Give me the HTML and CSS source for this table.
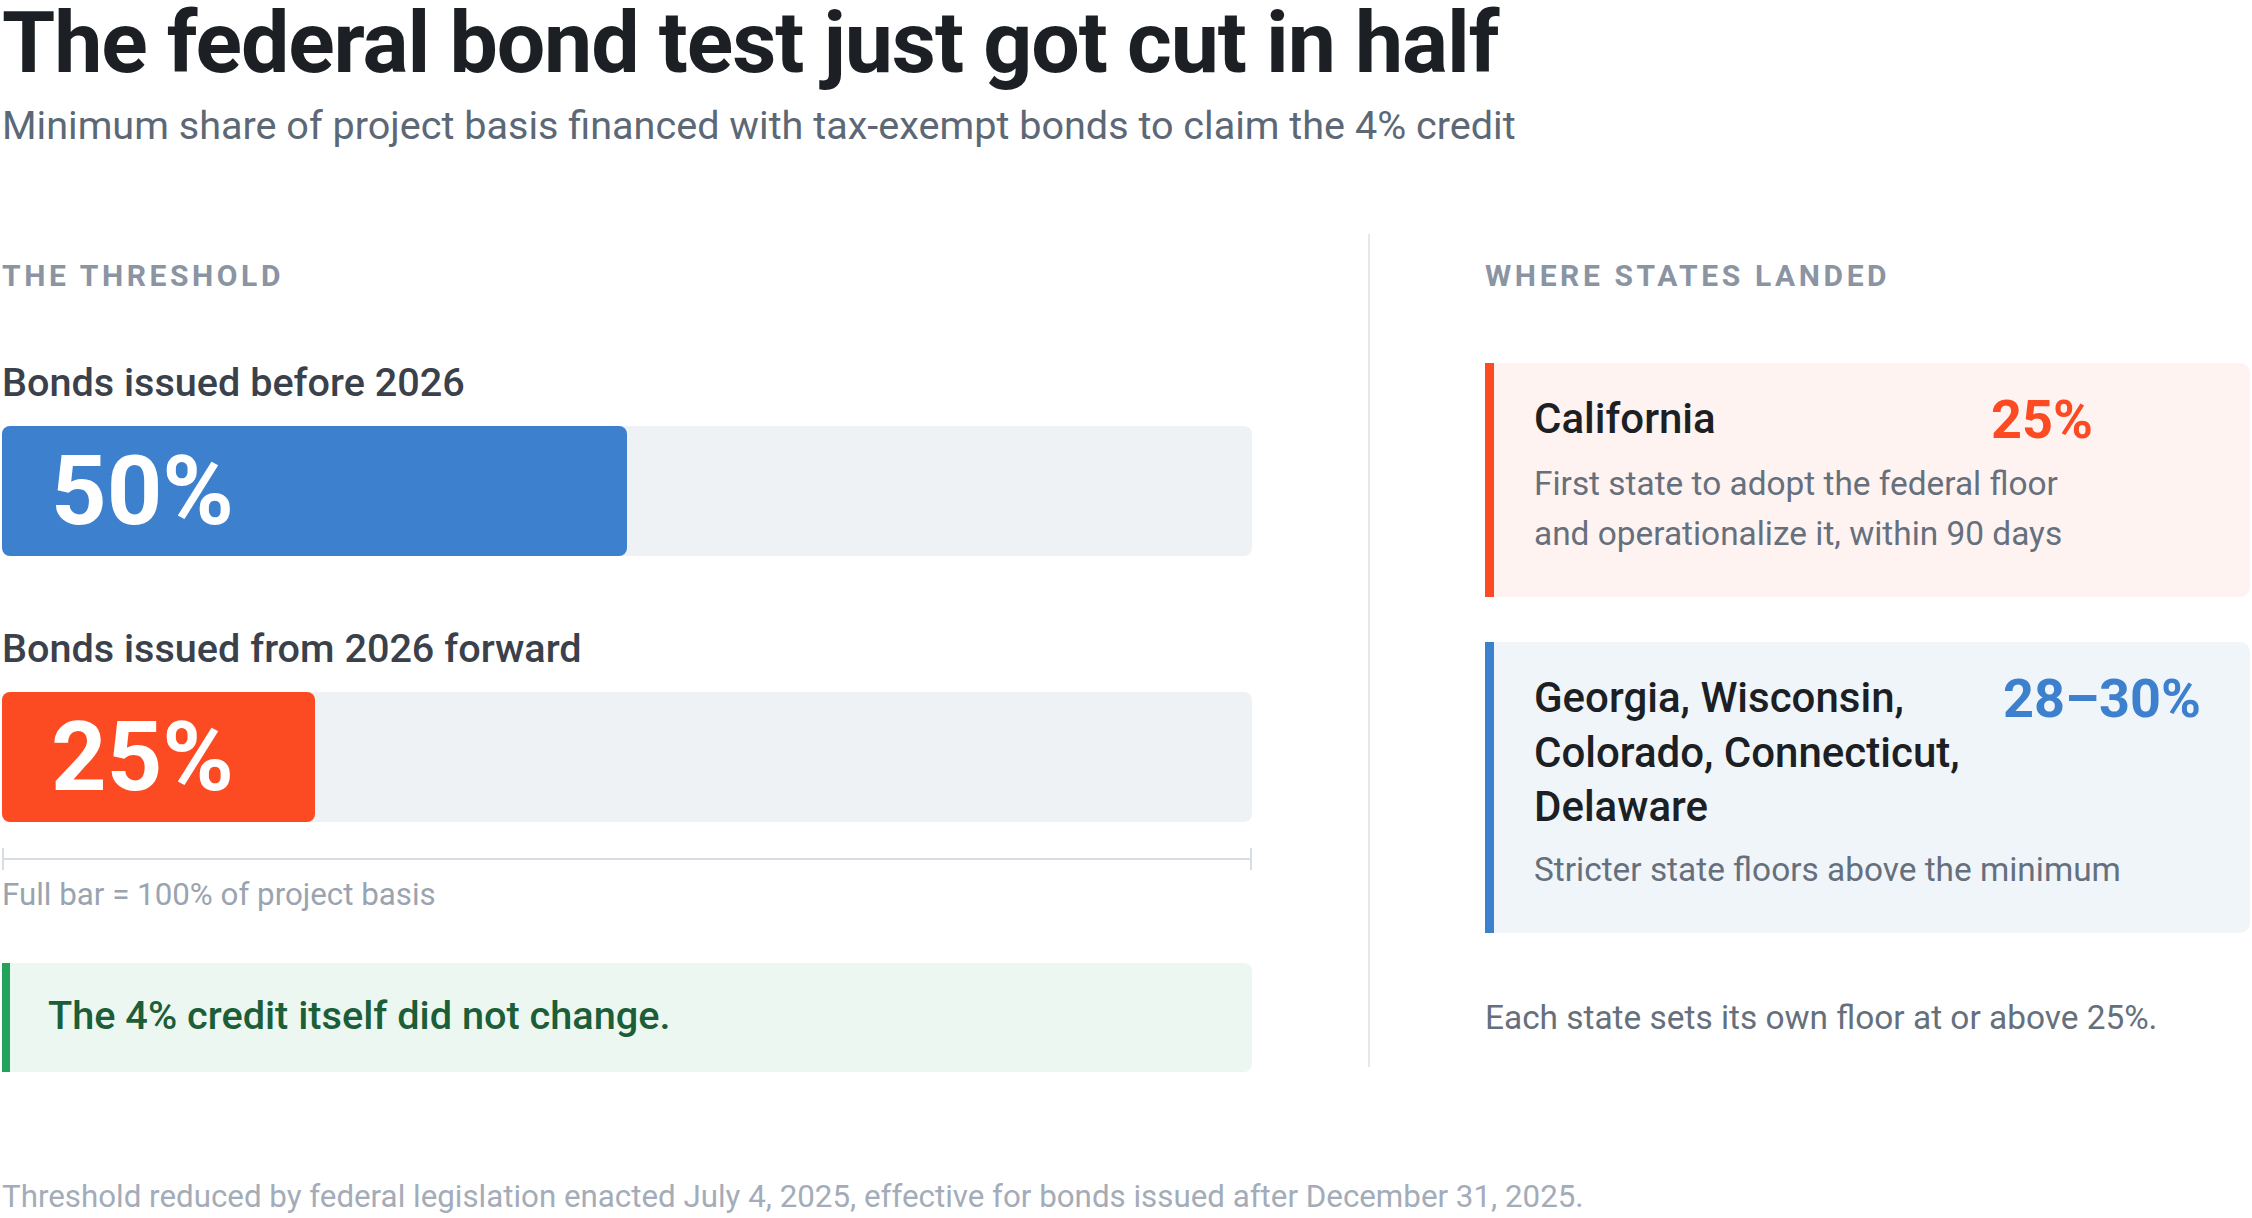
FILE: index.html
```html
<!DOCTYPE html>
<html lang="en">
<head>
<meta charset="utf-8">
<title>The federal bond test just got cut in half</title>
<link rel="stylesheet" href="styles.css">
</head>
<body>
<div class="page">
  <h1 class="title">The federal bond test just got cut in half</h1>
  <p class="subtitle">Minimum share of project basis financed with tax-exempt bonds to claim the 4% credit</p>

  <div class="main">
    <section class="col">
      <div class="eyebrow">The threshold</div>
      <div class="bar-list">
        <div class="bar-row">
          <div class="bar-label">Bonds issued before 2026</div>
          <div class="track">
            <div class="fill fill-blue" style="width: 50%">50%</div>
          </div>
        </div>
        <div class="bar-row">
          <div class="bar-label">Bonds issued from 2026 forward</div>
          <div class="track">
            <div class="fill fill-red" style="width: 25%">25%</div>
          </div>
        </div>
      </div>
      <div class="axis"><div class="axis-line"></div></div>
      <div class="axis-caption">Full bar = 100% of project basis</div>
      <div class="callout">The 4% credit itself did not change.</div>
    </section>

    <div class="divider"></div>

    <section class="col">
      <div class="eyebrow">Where states landed</div>
      <div class="states">
        <div class="card card-red">
          <div class="card-head">
            <div class="card-name">California</div>
            <div class="card-pct pct-red">25%</div>
          </div>
          <p class="card-desc">First state to adopt the federal floor<br>and operationalize it, within 90 days</p>
        </div>
        <div class="card card-blue">
          <div class="card-head">
            <div class="card-name">Georgia, Wisconsin, Colorado, Connecticut, Delaware</div>
            <div class="card-pct pct-blue">28–30%</div>
          </div>
          <p class="card-desc">Stricter state floors above the minimum</p>
        </div>
      </div>
      <p class="note">Each state sets its own floor at or above 25%.</p>
    </section>
  </div>

  <p class="footer">Threshold reduced by federal legislation enacted July 4, 2025, effective for bonds issued after December 31, 2025.</p>
</div>
</body>
</html>
```

FILE: styles.css
```css
html, body {
  margin: 0;
  padding: 0;
  background: #ffffff;
}

.page {
  width: 2248px;
  margin: 0 auto;
  font-family: Roboto, "Noto Sans", "Liberation Sans", sans-serif;
  color: #1c1f24;
}

.title {
  margin: 0;
  font-size: 86px;
  line-height: 1;
  font-weight: 700;
  letter-spacing: -1.1px;
  color: #1c1f24;
}

.subtitle {
  margin: 14px 0 0;
  font-size: 39.6px;
  line-height: 52px;
  font-weight: 400;
  color: #5d6876;
}

.main {
  display: grid;
  grid-template-columns: 1250px 2px 1fr;
  column-gap: 115.5px;
  margin-top: 82px;
}

.col {
  padding-top: 24px;
  min-width: 0;
}

.divider {
  background: #e4e7eb;
  margin-bottom: 5px;
}

.eyebrow {
  font-size: 30px;
  line-height: 36px;
  font-weight: 700;
  letter-spacing: 0.12em;
  text-transform: uppercase;
  color: #8a94a3;
}

/* Bars */
.bar-list {
  margin-top: 63px;
  display: flex;
  flex-direction: column;
  gap: 67px;
}

.bar-label {
  font-size: 39.6px;
  line-height: 52px;
  font-weight: 500;
  color: #3a414b;
}

.track {
  margin-top: 17px;
  height: 130px;
  background: #eef2f5;
  border-radius: 8px;
  display: flex;
}

.fill {
  box-sizing: border-box;
  display: flex;
  align-items: center;
  padding-left: 49px;
  border-radius: 8px;
  color: #ffffff;
  font-size: 97px;
  line-height: 1;
  font-weight: 700;
}

.fill-blue { background: #3d80cd; }
.fill-red { background: #fc4b22; }

.axis {
  margin-top: 26px;
  height: 22px;
  border-left: 2px solid #d8dde3;
  border-right: 2px solid #d8dde3;
  display: flex;
  align-items: center;
}

.axis-line {
  flex: 1;
  height: 2px;
  background: #d8dde3;
}

.axis-caption {
  margin-top: 5px;
  font-size: 31.3px;
  line-height: 1.3;
  color: #9aa4b1;
}

.callout {
  margin-top: 47px;
  background: #edf7f1;
  border-left: 8px solid #22a35a;
  border-radius: 0 8px 8px 0;
  padding: 29px 38px 32px;
  font-size: 39.7px;
  line-height: 48px;
  font-weight: 500;
  color: #1b5e37;
}

/* State cards */
.states {
  margin-top: 69px;
  display: flex;
  flex-direction: column;
  gap: 45px;
}

.card {
  border-left: 9px solid;
  border-radius: 0 10px 10px 0;
  padding: 29px 40px 38px 40px;
}

.card-red {
  background: #fef3f1;
  border-left-color: #fc4b22;
}

.card-blue {
  background: #f0f5fa;
  border-left-color: #3d80cd;
}

.card-head {
  display: grid;
  grid-template-columns: 1fr 219px;
  align-items: start;
}

.card-blue .card-head {
  grid-template-columns: 1fr 207px;
}

.card-name {
  font-size: 42px;
  line-height: 1.3;
  font-weight: 500;
  color: #1c1f24;
}

.card-pct {
  font-size: 54px;
  line-height: 1.05;
  font-weight: 700;
}

.pct-red { color: #fc4b22; }
.pct-blue { color: #3d80cd; }

.card-desc {
  margin: 10px 0 0;
  font-size: 33.4px;
  line-height: 1.5;
  color: #66707d;
}

.note {
  margin: 60px 0 0;
  font-size: 33.4px;
  line-height: 1.5;
  color: #66707d;
}

.footer {
  margin: 105px 0 0;
  font-size: 31.3px;
  line-height: 1.3;
  color: #a3acb8;
}
```
